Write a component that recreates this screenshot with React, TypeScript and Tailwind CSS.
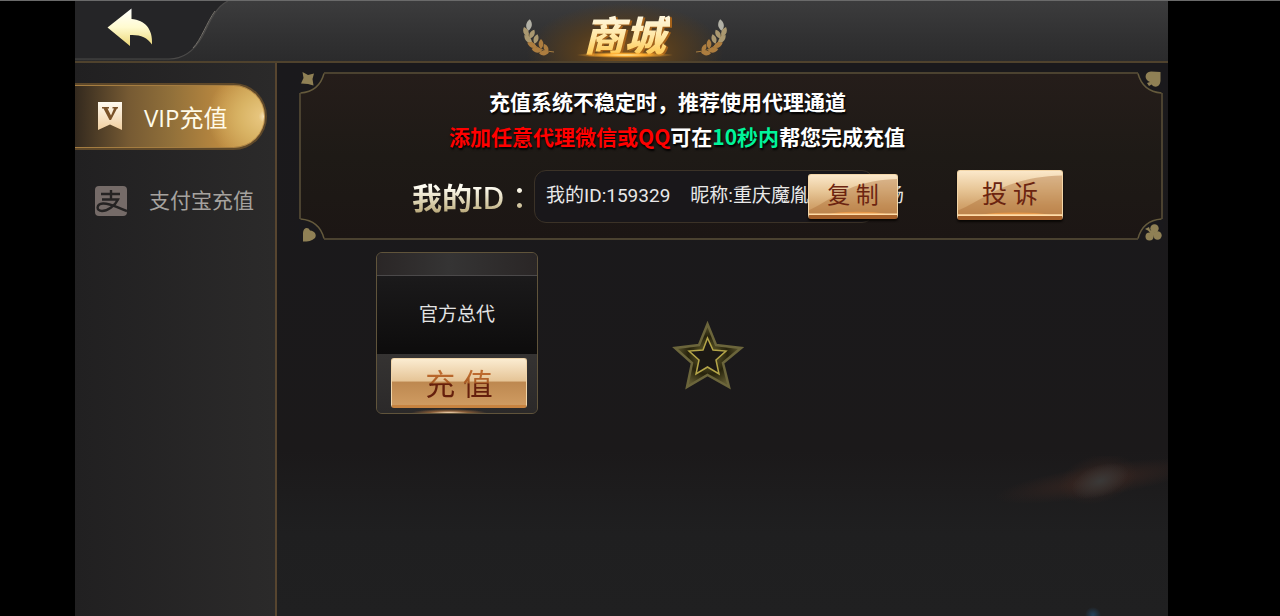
import React from "react";

const CJK = "font-['Roboto','Noto_Sans_CJK_SC',sans-serif]";

function Laurel({ flip = false }: { flip?: boolean }) {
  const leaves = [
    { x: 6, y: 6, r: 8, s: 1.3 },
    { x: 3, y: 13, r: -22, s: 1.2 },
    { x: 9, y: 15, r: 28, s: 1.1 },
    { x: 5, y: 20, r: -42, s: 1.2 },
    { x: 13, y: 20, r: 18, s: 1.1 },
    { x: 9, y: 26, r: -62, s: 1.2 },
    { x: 18, y: 25, r: 0, s: 1.1 },
    { x: 14, y: 31, r: -78, s: 1.2 },
    { x: 23, y: 29, r: -25, s: 1 },
    { x: 21, y: 34, r: -95, s: 1.1 },
  ];
  return (
    <svg viewBox="0 0 32 38" className={flip ? "h-[38px] w-8 -scale-x-100" : "h-[38px] w-8"} aria-hidden="true">
      <path d="M4 12C6 24 15 32 31 33" fill="none" stroke="#a57b40" strokeWidth="1.2" />
      {leaves.map((l, i) => (
        <path
          key={i}
          d="M0 -5C3.2 -2 3.2 2 0 5C-3.2 2 -3.2 -2 0 -5Z"
          transform={`translate(${l.x} ${l.y}) rotate(${l.r}) scale(${l.s * 0.9})`}
          fill={l.y < 12 ? "#b2b1a6" : l.y < 22 ? "#aa9870" : "#ad7d3f"}
        />
      ))}
    </svg>
  );
}

function Corner({ place, children }: { place: string; children: React.ReactNode }) {
  return (
    <span className={`absolute block h-[22px] w-[26px] ${place}`} aria-hidden="true">
      {children}
    </span>
  );
}

function Corners() {
  const bg = "#1a191c";
  const line = "#655a3c";
  const gold = "#8f8055";
  return (
    <>
      <Corner place="-left-0.5 -top-0.5">
        <svg viewBox="0 0 26 22" className="h-full w-full overflow-visible">
          <path d="M0 0H25V1.5C25 12 15 21 1.5 21H0Z" fill={bg} />
          <path d="M25 1.5C22 13 14 20 1.5 21" fill="none" stroke={line} strokeWidth="1.5" />
          <path d="M3.500 0L9 3L15 1.500L13.500 7L14.500 13.500L9 12L2 11.500L4.500 6Z" fill={gold} />
        </svg>
      </Corner>
      <Corner place="-right-0.5 -top-0.5">
        <svg viewBox="0 0 26 22" className="h-full w-full overflow-visible">
          <path d="M26 0H1V1.500C1 12 11 21 24.500 21H26Z" fill={bg} />
          <path d="M1 1.500C4 13 12 20 24.500 21" fill="none" stroke={line} strokeWidth="1.5" />
          <path d="M23.500 0L23.500 9C23 15 18 16.500 14.500 12.500L12 14L10 11L13 10C7 8 7 0 14 -0.500Z" fill={gold} />
        </svg>
      </Corner>
      <Corner place="-bottom-0.5 -left-0.5">
        <svg viewBox="0 0 26 22" className="h-full w-full overflow-visible">
          <path d="M0 22H25V20.500C25 10 15 1 1.500 1H0Z" fill={bg} />
          <path d="M25 20.500C22 9 14 2 1.500 1" fill="none" stroke={line} strokeWidth="1.5" />
          <path d="M4 23.500V15C4 10 9 8 11 12.500C16 13 18 17 16 20C13 23 9 23.500 4 23.500Z" fill={gold} />
        </svg>
      </Corner>
      <Corner place="-bottom-0.5 -right-0.5">
        <svg viewBox="0 0 26 22" className="h-full w-full overflow-visible">
          <path d="M26 22H1V20.500C1 10 11 1 24.500 1H26Z" fill={bg} />
          <path d="M1 20.500C4 9 12 2 24.500 1" fill="none" stroke={line} strokeWidth="1.5" />
          <g fill={gold}>
            <circle cx="17.500" cy="10.500" r="4.200" />
            <circle cx="20.500" cy="17.500" r="4.200" />
            <circle cx="12.500" cy="18.500" r="4" />
            <path d="M8 11L12 9L13 12L19 15L16 18L11 12.500Z" />
          </g>
        </svg>
      </Corner>
    </>
  );
}

function GoldButton({ children, size }: { children: string; size: string }) {
  return (
    <button
      type="button"
      className={`relative flex shrink-0 items-center justify-center overflow-hidden rounded-[3px] border border-b-4 border-[#f3d6a8] border-b-[#a5602a] bg-[linear-gradient(#fbe8ca_0%,#e8c798_40%,#d3a56e_75%,#c8925a_100%)] pt-0.5 text-[#6b2410] shadow-[0_2px_2px_#0a0705] ${size}`}
    >
      <svg viewBox="0 0 100 50" preserveAspectRatio="none" className="absolute inset-0 h-full w-full" aria-hidden="true">
        <path d="M0 44C28 30 45 7 100 5V50H0Z" fill="#a86a32" fillOpacity="0.38" />
        <ellipse cx="55" cy="50" rx="34" ry="4" fill="#ffa347" fillOpacity="0.6" />
        <path d="M0 49H100" stroke="#ffdca8" strokeWidth="2" />
      </svg>
      <span className="relative whitespace-pre">{children}</span>
    </button>
  );
}

export default function App() {
  return (
    <div className={`min-h-screen border-t border-[#6a6a6a] bg-black pl-[75px] pr-[112px] text-white ${CJK}`}>
      <div className="flex min-h-[615px] flex-col bg-[#1b191a]">
        <header className="relative flex h-[62px] items-center justify-center border-b-2 border-[#4f422d] bg-[linear-gradient(#3c3c3d,#313132_60%,#2b2b2c)]">
          <svg viewBox="0 0 160 60" className="absolute left-0 top-0 h-[60px] w-40" aria-hidden="true">
            <path d="M0 0H153C140 6 134 23 127 36C119 50 109 58 94 58H0Z" fill="#252527" />
            <path d="M0 58H94C109 58 119 50 127 36C134 23 140 6 153 0" fill="none" stroke="#4b4a49" strokeWidth="1.2" />
            <path d="M118 47C126 39 132 21 140 10" fill="none" stroke="#77736c" strokeWidth="1" />
          </svg>
          <button type="button" aria-label="返回" className="absolute left-8 top-[7px] h-10 w-[46px]">
            <svg viewBox="0 0 46 40" className="h-full w-full">
              <defs>
                <linearGradient id="back" x1="0" y1="0" x2="0" y2="1">
                  <stop offset="0" stopColor="#ffffff" />
                  <stop offset="0.5" stopColor="#fffbd0" />
                  <stop offset="1" stopColor="#ecd778" />
                </linearGradient>
              </defs>
              <path d="M0.500 19.500L24.500 0.500V11C38 12 46 21 45 36.500C40 29 33 26.500 23 27V38Z" fill="url(#back)" />
            </svg>
          </button>
          <div className="mr-[-6px] flex h-full items-center justify-center gap-[25px] bg-[radial-gradient(ellipse_at_50%_85%,#80541c_0%,#523c20_35%,transparent_68%)]">
            <span className="pt-3.5">
              <Laurel />
            </span>
            <h1 className="relative pt-1">
              <span className="bg-[linear-gradient(#fff6da_25%,#ffe7a5_55%,#ffcf62_80%)] bg-clip-text px-1 font-['Noto_Sans_CJK_SC',sans-serif] text-[41px] font-black italic leading-[50px] text-transparent drop-shadow-[2px_1px_0_#a5621a]">
                商城
              </span>
              <span className="absolute -left-1 bottom-0 h-1.5 w-[98px] bg-[radial-gradient(ellipse,#fff2ae_0%,#ffab2e_30%,transparent_70%)]" />
            </h1>
            <span className="pt-3.5">
              <Laurel flip />
            </span>
          </div>
        </header>

        <div className="flex grow">
          <nav className="w-[202px] shrink-0 border-r-2 border-[#57452f] bg-[linear-gradient(90deg,#212021,#2b2a2a)] pt-5">
            <button
              type="button"
              className="flex h-[67px] w-48 items-center rounded-r-full border-2 border-l-0 border-[#5e482a] bg-[radial-gradient(ellipse_60px_50px_at_100%_50%,#fff3dc_0%,#e6c47c_14%,#d9b465_45%,transparent_100%),linear-gradient(90deg,#33291e,#765a33_28%,#91703a_50%,#bd8a40_78%,#c89949)] bg-origin-border pl-[22px] text-2xl text-[#fffbe9] shadow-[inset_-1px_0_0_#c99b51,inset_0_1px_0_#a57d41,inset_0_-1px_0_#a57d41]"
            >
              <svg viewBox="0 0 26 30" className="mb-0.5 h-[30px] w-[26px]" aria-hidden="true">
                <defs>
                  <linearGradient id="ribbon" x1="0" y1="0" x2="0" y2="1">
                    <stop offset="0" stopColor="#fffaf0" />
                    <stop offset="1" stopColor="#f1cfa0" />
                  </linearGradient>
                </defs>
                <path d="M1 1H25V29L13 23.500L1 29Z" fill="url(#ribbon)" />
                <path d="M5 6H12V7.500H10.500L14 14.500L17 7.500H15.500V6H21V7.500H20L14 19H12.500L6.500 7.500H5Z" fill="#7a5229" />
              </svg>
              <span className="ml-[21px] pt-0.5 font-['Open_Sans','Noto_Sans_CJK_SC',sans-serif]">VIP充值</span>
            </button>
            <button type="button" className="mt-[18px] flex h-[66px] w-full items-center pl-5 text-[21px] text-[#a5a29f]">
              <svg viewBox="0 0 32 30" className="h-[30px] w-8" aria-hidden="true">
                <rect width="32" height="30" rx="4" fill="#756b68" />
                <g fill="none" stroke="#252323" strokeWidth="2.400">
                  <path d="M6 8H25M16 4V13M7 13.500H23C20 20 12 25 7 25C1 25 1 18 8 17.500C16 17 22 22 32 25" />
                </g>
              </svg>
              <span className="ml-[22px] pt-0.5">支付宝充值</span>
            </button>
          </nav>

          <main className="relative grow bg-[linear-gradient(#1a191c_0%,#1b191a_70%,#1f1f20_85%,#202021_100%)] pb-6 pl-[22px] pr-[5px] pt-[9px]">
            <svg viewBox="0 0 200 160" className="absolute bottom-0 right-0 h-40 w-[200px]" aria-hidden="true">
              <defs>
                <radialGradient id="dust">
                  <stop offset="0" stopColor="#3c2721" stopOpacity="0.75" />
                  <stop offset="1" stopColor="#3c2721" stopOpacity="0" />
                </radialGradient>
                <radialGradient id="core">
                  <stop offset="0" stopColor="#3a3938" />
                  <stop offset="1" stopColor="#3a3938" stopOpacity="0" />
                </radialGradient>
                <radialGradient id="spark">
                  <stop offset="0" stopColor="#25425c" />
                  <stop offset="1" stopColor="#25425c" stopOpacity="0" />
                </radialGradient>
              </defs>
              <ellipse cx="130" cy="25" rx="105" ry="16" transform="rotate(-9 130 25)" fill="url(#dust)" />
              <ellipse cx="130" cy="23" rx="40" ry="24" transform="rotate(-15 130 23)" fill="url(#dust)" />
              <ellipse cx="132" cy="25" rx="30" ry="16" transform="rotate(-20 132 25)" fill="url(#core)" />
              <circle cx="125" cy="159" r="8" fill="url(#spark)" />
            </svg>

            <section className="relative h-[168px] border-2 border-[#4b4230] bg-[linear-gradient(#251d1a,#1e1a16_50%,#1c1614)]">
              <Corners />
              <div className="pt-2.5 text-[21px] font-bold leading-[35px] [text-shadow:1px_2px_2px_#000]">
                <p className="pl-[188px] font-['Noto_Sans_CJK_SC',sans-serif]">充值系统不稳定时，推荐使用代理通道</p>
                <p className="pl-[148px] font-['Noto_Sans_CJK_SC',sans-serif]">
                  <span className="text-[#ff0000]">添加任意代理微信或QQ</span>可在<span className="text-[#00f59a]">10秒内</span>帮您完成充值
                </p>
              </div>
              <div className="mt-4 flex items-start pl-[111px]">
                <span className="w-[122px] shrink-0 whitespace-nowrap bg-[linear-gradient(#fffdf3_30%,#d6cba7_60%,#a99663_85%)] bg-clip-text font-['Noto_Sans','Noto_Sans_CJK_TC',sans-serif] text-[30px] font-medium leading-[56px] text-transparent">
                  <span className="font-bold">我的</span>ID：
                </span>
                <div className="flex h-[53px] w-[340px] shrink-0 items-center whitespace-nowrap rounded-xl border border-[#3b3227] bg-[#19171a] pl-[11px] text-[19px] text-[#e8e8e8]">
                  <span>我的ID:159329</span>
                  <span className="ml-5">昵称:重庆魔胤的娱乐广场</span>
                </div>
                <div className="relative ml-[-66px] mt-1">
                  <GoldButton size="h-[45px] w-[90px] text-[23px]">复 制</GoldButton>
                </div>
                <div className="ml-[59px]">
                  <GoldButton size="h-[50px] w-[106px] text-[25px]">投 诉</GoldButton>
                </div>
              </div>
            </section>

            <div className="mt-3 flex items-center pl-[77px]">
              <article className="flex h-[162px] w-[162px] flex-col overflow-hidden rounded-md border border-[#60543b] bg-[#2b2828]">
                <div className="h-[23px] shrink-0 border-b border-[#4b494a] bg-[linear-gradient(90deg,#2a2626,#353434_45%,#2a2626)]" />
                <h2 className="flex h-[78px] shrink-0 items-center justify-center bg-[linear-gradient(#1b1a1b,#0d0c0c)] text-[19px] text-[#e3e3e3]">官方总代</h2>
                <div className="flex grow justify-center bg-[radial-gradient(ellipse_38px_4px_at_45%_100%,#ffe2bf,#885d38_50%,transparent),linear-gradient(#353332,#2b2929)] pl-1 pt-1">
                  <button
                    type="button"
                    className="h-[50px] w-[136px] whitespace-pre rounded-[3px] border border-b-[3px] border-[#f1d5a9] border-b-[#c78340] bg-[linear-gradient(#fbecd1_0%,#e5c496_48%,#bd8850_50%,#cf9b61_100%)] pt-1 text-[30px] leading-[44px]"
                  >
                    <span className="bg-[linear-gradient(#bd6a2e_20%,#a85b24_46%,#651f0c_48%)] bg-clip-text text-transparent">充 值</span>
                  </button>
                </div>
              </article>
              <svg viewBox="0 0 72 72" className="ml-[134px] mt-[46px] h-[72px] w-[72px]" aria-hidden="true">
                <defs>
                  <radialGradient id="starGlow">
                    <stop offset="0.3" stopColor="#4d4821" />
                    <stop offset="0.6" stopColor="#27230c" />
                    <stop offset="1" stopColor="#5e5830" />
                  </radialGradient>
                </defs>
                <path d="M35.500 4L44 25L69 28L51 43L57 67L35.500 55L15 67L20 43L3 28L27 25Z" fill="url(#starGlow)" stroke="#6b653b" strokeWidth="2.500" />
                <path d="M35.500 18L41 30L54 31L44 40L47 54L35.500 47L24 54L27 40L17 31L31 30Z" fill="#1b1814" stroke="#b4a548" strokeWidth="1.500" />
              </svg>
            </div>
          </main>
        </div>
      </div>
    </div>
  );
}
